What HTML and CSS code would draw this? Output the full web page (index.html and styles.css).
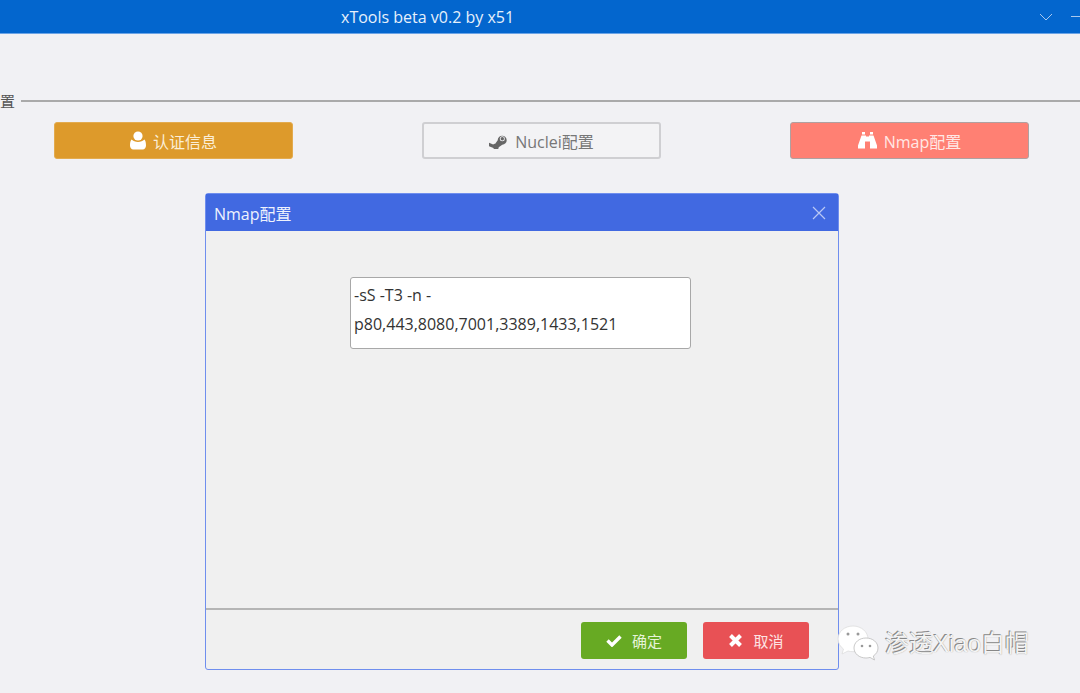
FILE: index.html
```html
<!DOCTYPE html>
<html lang="zh">
<head>
<meta charset="utf-8">
<title>xTools beta v0.2 by x51</title>
<link rel="stylesheet" href="styles.css">
</head>
<body>
<header class="appbar">
  <span class="appbar-title">xTools beta v0.2 by x51</span>
  <div class="appbar-controls">
    <svg class="chevron" width="14" height="8" viewBox="0 0 14 8"><path d="M1 1l6 6 6-6" fill="none" stroke="#a9c8ee" stroke-width="1"/></svg>
    <span class="minimize"></span>
  </div>
</header>
<main class="content">
  <div class="section-head"><span class="section-label">置</span><span class="section-line"></span></div>
  <div class="actions">
    <button class="btn btn-orange">
      <svg class="icon" width="16" height="19" viewBox="0 0 16 19"><circle cx="8" cy="5" r="4.6" fill="#fff"/><path d="M1.6 8.6C.5 9.6 0 11.6 0 14.6 0 17 1.300 18.500 3.300 18.500h9.400c2 0 3.300-1.500 3.300-3.900 0-3-.5-5-1.600-6-1.500 1.600-3.900 2.400-6.400 2.400s-4.900-.8-6.400-2.400z" fill="#fff"/></svg>
      <span>认证信息</span>
    </button>
    <button class="btn btn-plain">
      <svg class="icon" width="19" height="16" viewBox="0 0 19 16"><path d="M0 9.800l4.200 1.700c.5-.5 1.200-.8 2-.7l2.500-3.600a4.500 4.500 0 1 1 4.600 4.500l-3.600 2.600a2.700 2.700 0 0 1-5.300.6L0 13.200z" fill="#666"/><circle cx="13.300" cy="5.700" r="2.500" fill="#f1f1f4"/><circle cx="13.300" cy="5.700" r="1.700" fill="#666"/></svg>
      <span>Nuclei配置</span>
    </button>
    <button class="btn btn-salmon">
      <svg class="icon" width="19" height="17" viewBox="0 0 19 17"><path d="M4 0h3v2.500H4zM12 0h3v2.500h-3z" fill="#fff"/><path d="M3.500 3.500h4.500v1h3v-1h4.500l3.500 10v3h-7v-7h-5v7H0v-3z" fill="#fff"/></svg>
      <span>Nmap配置</span>
    </button>
  </div>
</main>

<section class="dialog">
  <div class="dialog-head">
    <span>Nmap配置</span>
    <svg width="14" height="14" viewBox="0 0 14 14"><path d="M1 1l12 12M13 1L1 13" stroke="#b9c8f4" stroke-width="1.200" fill="none"/></svg>
  </div>
  <div class="dialog-body">
    <div class="field">-sS -T3 -n -<br>p80,443,8080,7001,3389,1433,1521</div>
  </div>
  <div class="dialog-foot">
    <button class="btn-sm btn-green">
      <svg class="icon" width="16" height="13" viewBox="0 0 16 13"><path d="M1.500 6.500L6 11l8.500-8.500" fill="none" stroke="#fff" stroke-width="3.400"/></svg>
      <span>确定</span>
    </button>
    <button class="btn-sm btn-red">
      <svg class="icon" width="15" height="15" viewBox="0 0 15 15"><path d="M2.500 2.500l10 10M12.500 2.500l-10 10" fill="none" stroke="#fff" stroke-width="4"/></svg>
      <span>取消</span>
    </button>
  </div>
</section>

<aside class="watermark">
  <svg width="42" height="38" viewBox="0 0 42 38">
    <path d="M16 1C7.500 1 1 6.800 1 14c0 4 2 7.500 5.500 10L5 29l6-3c1.600.5 3.300.7 5 .7 8.500 0 15-5.700 15-12.700S24.500 1 16 1z" fill="#fff" stroke="#ddd" stroke-width=".8"/>
    <path d="M29 13c-6.800 0-12 4.400-12 10s5.200 10 12 10c1.400 0 2.700-.2 4-.6l4.500 2.600-1.200-4c3-1.900 4.700-4.800 4.700-8 0-5.600-5.200-10-12-10z" fill="#fff" stroke="#bbb" stroke-width=".8"/>
    <circle cx="11" cy="9" r="1.500" fill="#999"/><circle cx="21" cy="9" r="1.500" fill="#999"/>
    <circle cx="25" cy="21" r="1.300" fill="#999"/><circle cx="33" cy="21" r="1.300" fill="#999"/>
  </svg>
  <span class="watermark-text">渗透Xiao白帽</span>
</aside>
</body>
</html>
```

FILE: styles.css
```css
* { box-sizing: border-box; }
html, body { height: 100%; }
body {
  margin: 0;
  height: 693px;
  overflow: hidden;
  position: relative;
  background: #f1f1f4;
  font-family: "Open Sans", "Noto Sans CJK SC", sans-serif;
}
.appbar {
  height: 34px;
  background: #0366ce;
  border-bottom: 1px solid #6ba4e6;
  display: flex;
  align-items: center;
  justify-content: space-between;
  padding-left: 341px;
  color: #e6f0fb;
  font-size: 16px;
}
.appbar-title { line-height: 30px; }
.appbar-controls { display: flex; align-items: center; gap: 18px; }
.chevron { display: block; }
.minimize { display: block; width: 9px; height: 1px; background: #a9c8ee; }
.content { padding-top: 58px; }
.section-head { display: flex; align-items: center; height: 17px; }
.section-label { font-size: 15px; line-height: 17px; color: #555; width: 15px; font-family: "Noto Sans CJK SC", sans-serif; }
.section-line { flex: 1; height: 2px; margin-left: 6px; background: #aaa; }
.actions {
  display: flex;
  justify-content: space-between;
  padding: 13px 51px 0 54px;
}
.btn {
  width: 239px;
  height: 37px;
  display: flex;
  align-items: center;
  justify-content: center;
  gap: 7px;
  border-radius: 3px;
  font: inherit;
  font-size: 16px;
  padding: 0;
}
.icon { display: block; flex: none; }
.btn-orange { background: #dd9a2b; border: 1px solid #e3ab4e; color: #fbeed7; }
.btn-plain { background: #f3f3f5; border: 2px solid #cfcfd2; color: #777; }
.btn-salmon { background: #ff8073; border: 1px solid #b0a0a0; color: #ffe8e5; }
.dialog {
  position: absolute;
  left: 205px;
  top: 193px;
  width: 634px;
  height: 477px;
  display: flex;
  flex-direction: column;
  background: #f0f0f0;
  border: 1px solid #6f8eee;
  border-radius: 3px;
}
.dialog-head {
  height: 37px;
  flex: none;
  background: #4169e1;
  color: #eef2fd;
  display: flex;
  align-items: center;
  justify-content: space-between;
  padding: 0 12px 0 8px;
  font-size: 16px;
}
.dialog-body { flex: 1; padding: 46px 0 0 144px; }
.field {
  width: 341px;
  height: 72px;
  background: #fff;
  border: 1px solid #a8a8a8;
  border-radius: 3px;
  padding: 3px;
  color: #333;
  font-size: 16px;
  line-height: 28.500px;
}
.dialog-foot {
  height: 61px;
  flex: none;
  border-top: 2px solid #b5b5b5;
  display: flex;
  justify-content: flex-end;
  gap: 16px;
  padding: 12px 29px 0 0;
}
.btn-sm {
  width: 106px;
  height: 37px;
  display: flex;
  align-items: center;
  justify-content: center;
  gap: 10px;
  border: 0;
  border-radius: 3px;
  font: inherit;
  font-size: 15px;
  padding: 0;
}
.btn-green { background: #67aa23; color: #e6f3d8; }
.btn-red { background: #e85155; color: #fde3e3; }
.watermark {
  position: absolute;
  left: 837px;
  top: 625px;
  display: flex;
  align-items: center;
  gap: 6px;
}
.watermark-text {
  font-family: "Liberation Sans", "Noto Sans CJK SC", sans-serif;
  font-size: 24px;
  line-height: 38px;
  color: #f4f4f4;
  text-shadow: -1px -1px 0 #888, 0 0 1px #999;
}
```
